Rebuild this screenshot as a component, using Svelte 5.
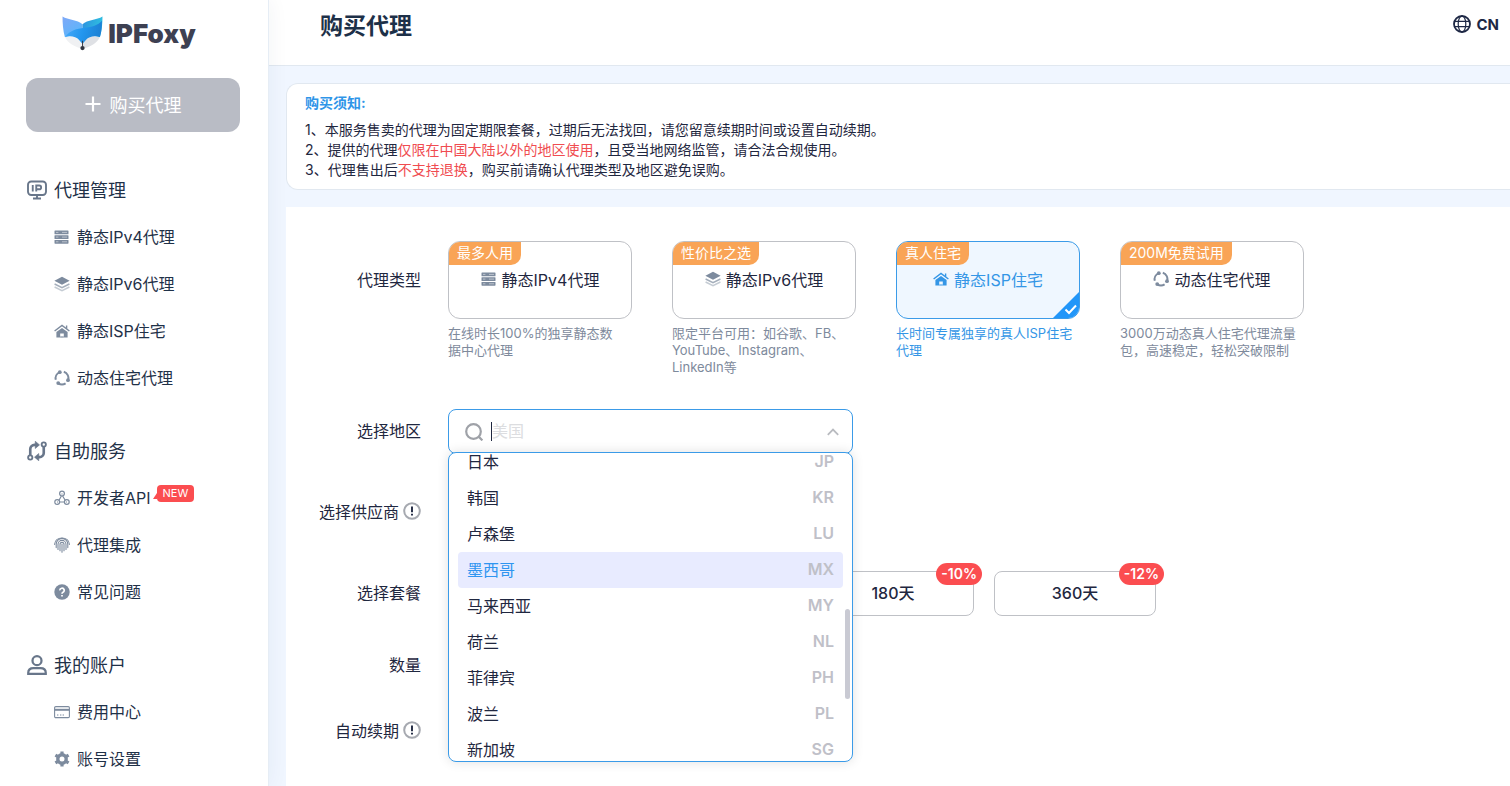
<script lang="ts">
    const groups = [
        {
            icon: 'monitor',
            title: '代理管理',
            items: [
                { icon: 'server', text: '静态IPv4代理' },
                { icon: 'layers', text: '静态IPv6代理' },
                { icon: 'house', text: '静态ISP住宅' },
                { icon: 'cycle', text: '动态住宅代理' }
            ]
        },
        {
            icon: 'swap',
            title: '自助服务',
            items: [
                { icon: 'nodes', text: '开发者API', isNew: true },
                { icon: 'finger', text: '代理集成' },
                { icon: 'help', text: '常见问题' }
            ]
        },
        {
            icon: 'user',
            title: '我的账户',
            items: [
                { icon: 'card', text: '费用中心' },
                { icon: 'gear', text: '账号设置' }
            ]
        }
    ];

    const types = [
        { icon: 'server', name: '静态IPv4代理', tag: '最多人用', desc: '在线时长100%的独享静态数据中心代理' },
        { icon: 'layers', name: '静态IPv6代理', tag: '性价比之选', desc: '限定平台可用：如谷歌、FB、YouTube、Instagram、LinkedIn等' },
        { icon: 'house', name: '静态ISP住宅', tag: '真人住宅', desc: '长时间专属独享的真人ISP住宅代理' },
        { icon: 'cycle', name: '动态住宅代理', tag: '200M免费试用', desc: '3000万动态真人住宅代理流量包，高速稳定，轻松突破限制' }
    ];

    const regions = [
        ['日本', 'JP'],
        ['韩国', 'KR'],
        ['卢森堡', 'LU'],
        ['墨西哥', 'MX'],
        ['马来西亚', 'MY'],
        ['荷兰', 'NL'],
        ['菲律宾', 'PH'],
        ['波兰', 'PL'],
        ['新加坡', 'SG']
    ];

    const plans = [
        { name: '180天', off: '-10%' },
        { name: '360天', off: '-12%' }
    ];

    let selectedType = $state(2);
    let hovered = $state('MX');
    let keyword = $state('');
</script>

{#snippet icon(name: string)}
    <svg class="icon" viewBox="0 0 16 16" fill="none" stroke="currentColor" stroke-width="1.5" aria-hidden="true">
        {#if name === 'monitor'}
            <rect x="0.8" y="1.2" width="14.4" height="10.8" rx="2.6" />
            <path d="M8 12v2.6M4.8 14.8h6.4M4.6 4v5.2M7.4 9.2V4.4h2.4a1.5 1.5 0 0 1 0 3H7.4" />
        {:else if name === 'server'}
            <g fill="currentColor" stroke="none">
                <rect x="0.5" y="1.5" width="14" height="3.8" rx="0.6" />
                <rect x="0.5" y="6.2" width="14" height="3.8" rx="0.6" />
                <rect x="0.5" y="10.9" width="14" height="3.8" rx="0.6" />
            </g>
            <path d="M2 3.4h2.4M8 3.4h5M2 8.1h2.4M8 8.1h5M2 12.8h2.4M8 12.8h5" stroke="#fff" stroke-width="0.8" opacity="0.6" />
        {:else if name === 'layers'}
            <path d="M8 .8 15.6 4.8 8 8.8.4 4.8z" fill="currentColor" stroke="none" />
            <path d="m.6 8 7.4 3.7L15.4 8" opacity="0.7" />
            <path d="m.6 11 7.4 3.7 7.4-3.7" opacity="0.45" />
        {:else if name === 'house'}
            <path d="M.6 8 8 2.4 15.4 8M12.6 2.4v3" stroke-width="1.4" />
            <path d="M2.4 9 8 4.9 13.6 9v5.6H9.8v-4H6.2v4H2.4z" fill="currentColor" stroke="none" />
            <path d="M6.2 14h3.6" stroke-width="1.2" />
        {:else if name === 'cycle'}
            <g stroke-width="2">
                <path d="M9.8 1.8a6.4 6.4 0 0 1 4.2 8.4" />
                <path d="M11.6 13.3a6.4 6.4 0 0 1-7.4-.2" />
                <path d="M1.8 9.8a6.4 6.4 0 0 1 3.7-7.5" />
            </g>
            <g fill="currentColor" stroke="none">
                <circle cx="14" cy="10.2" r="1.9" />
                <circle cx="4.2" cy="13.1" r="1.9" />
                <circle cx="5.8" cy="2.2" r="1.9" />
            </g>
        {:else if name === 'swap'}
            <circle cx="2.6" cy="13.2" r="1.7" />
            <circle cx="13.4" cy="2.8" r="1.7" />
            <path d="M2.6 11.4V6.5a3.4 3.4 0 0 1 3.4-3.4h1.6M13.4 4.6v4.9a3.4 3.4 0 0 1-3.4 3.4H8.4" stroke-width="2.1" />
            <path d="M6.6.2 10 3.1 6.6 6zM9.4 10 6 12.9l3.4 2.9z" fill="currentColor" stroke-width="0.5" />
        {:else if name === 'nodes'}
            <g stroke-width="1.2">
                <circle cx="8" cy="3.6" r="2.4" />
                <circle cx="3.2" cy="12" r="2.4" />
                <circle cx="12.8" cy="12" r="2.4" />
                <path d="M7.4 6 5 10.2M8.6 6l2.6 4.2M5.8 12h4.4M8 3.4v1M3 12h1M12 12h1" />
            </g>
        {:else if name === 'finger'}
            <g stroke-width="1.1" stroke-linecap="round">
                <path d="M8 7v8.2M6 13.8V7.4a2 2 0 0 1 4 0v6.4" />
                <path d="M4 12.4V7.4a4 4 0 0 1 8 0v5" />
                <path d="M2.2 10.6V7.2a5.8 5.8 0 0 1 11.6 0v3.4" />
                <path d="M.6 7.4C.8 3.4 4 1 8 1s7.2 2.4 7.4 6.4" />
            </g>
        {:else if name === 'help'}
            <circle cx="8" cy="8" r="7.7" fill="currentColor" stroke="none" />
            <path d="M5.8 6.4a2.2 2.1 0 1 1 3.2 1.8c-.7.4-1 .7-1 1.5M8 11v1.6" stroke="#fff" stroke-width="1.7" />
        {:else if name === 'user'}
            <circle cx="8" cy="4.5" r="3.6" stroke-width="1.8" />
            <path d="M1 15v-.8c0-2.4 1.8-3.8 4.2-3.8h5.6c2.4 0 4.2 1.4 4.2 3.8v.8z" stroke-width="1.8" />
        {:else if name === 'card'}
            <rect x="0.6" y="2.6" width="14.8" height="11" rx="1.2" stroke-width="1.1" />
            <path d="M.6 5.8h14.8" stroke-width="2" />
            <path d="M3 11h1.4M6 11h1.4M8.6 11h1.4" stroke-width="1" />
        {:else if name === 'gear'}
            <circle cx="8" cy="8" r="4.2" stroke-width="3.4" />
            <path d="M8 .4v3M8 12.6v3M1.4 4.2 4 5.7M12 10.3l2.6 1.5M1.4 11.8 4 10.3M12 5.7l2.6-1.5" stroke-width="3.2" />
        {/if}
    </svg>
{/snippet}

{#snippet info()}
    <svg class="info" viewBox="0 0 18 18" aria-hidden="true">
        <circle cx="9" cy="9" r="7.8" fill="none" stroke="#a6a9b0" stroke-width="2" />
        <path d="M9 4.6v5.6M9 11.7v1.9" stroke="#1f2740" stroke-width="1.9" />
    </svg>
{/snippet}

<div class="page">
    <aside>
        <a class="logo" href="/">
            <svg viewBox="0 0 40 34" aria-hidden="true">
                <defs>
                    <linearGradient id="earL" x1="0" y1="0" x2="0.6" y2="1">
                        <stop offset="0" stop-color="#7fa8f8" />
                        <stop offset="1" stop-color="#5bb6fa" />
                    </linearGradient>
                    <linearGradient id="earR" x1="0" y1="0" x2="1" y2="0.3">
                        <stop offset="0" stop-color="#2d8fe0" />
                        <stop offset="1" stop-color="#2ec0e0" />
                    </linearGradient>
                    <linearGradient id="face" x1="0" y1="0.3" x2="1" y2="0.5">
                        <stop offset="0" stop-color="#46aafa" />
                        <stop offset="0.5" stop-color="#2396ee" />
                        <stop offset="1" stop-color="#1c7fd2" />
                    </linearGradient>
                </defs>
                <!-- cheeks -->
                <path d="M2.8 20.5C6 26.500 12 30 20 32V19z" fill="#f0f1f3" />
                <path d="M37 20.500C34 26.500 28 30 20 32V19z" fill="#dfe1e5" />
                <!-- ears -->
                <path d="M.5.500C6 4 15 3.500 20 8v8L2.800 20.500C1 14 .5 7 .5.500z" fill="url(#earL)" />
                <path d="M39.500.500C34 4 25 3.500 20 8v8l17 4.500C39 14 39.500 7 39.500.500z" fill="url(#earR)" />
                <!-- face -->
                <path d="M2.800 20.500C8 14 14 12.500 22 11.500c7-.8 13-2.500 17-7 0 6-.5 11-2 16-5-2-11-.5-13.500 2.500-1.500 1.500-2.500 3-3.500 4-1-1-2-2.500-3.500-4-2.500-3-8.700-4.500-13.700-2.500z" fill="url(#face)" />
                <path d="M19.600 24h.9v6h-.9z" fill="#30343f" />
                <circle cx="20" cy="31.200" r="2.100" fill="#30343f" />
            </svg>
            <span>IPFoxy</span>
        </a>
        <button class="buy" type="button">
            <svg viewBox="0 0 16 16" aria-hidden="true"><path d="M8 .5v15M.5 8h15" stroke="#fff" stroke-width="2.2" /></svg>
            购买代理
        </button>
        <nav>
            {#each groups as group}
                <section>
                    <h2>{@render icon(group.icon)}<span class="text">{group.title}</span></h2>
                    <ul>
                        {#each group.items as item}
                            <li>
                                <a href="/">
                                    {@render icon(item.icon)}
                                    <span class="text">{item.text}{#if item.isNew}<em>NEW</em>{/if}</span>
                                </a>
                            </li>
                        {/each}
                    </ul>
                </section>
            {/each}
        </nav>
    </aside>

    <main>
        <header>
            <h1>购买代理</h1>
            <button class="lang" type="button">
                <svg viewBox="0 0 18 18" fill="none" stroke="currentColor" aria-hidden="true">
                    <circle cx="9" cy="9" r="8" stroke-width="1.8" />
                    <ellipse cx="9" cy="9" rx="3.8" ry="8" stroke-width="1.2" />
                    <path d="M1.5 6.4h15M1.5 11.6h15" stroke-width="1.2" />
                </svg>
                CN
            </button>
        </header>

        <div class="body">
            <div class="notice">
                <strong>购买须知:</strong>
                <p>1、本服务售卖的代理为固定期限套餐，过期后无法找回，请您留意续期时间或设置自动续期。</p>
                <p>2、提供的代理<b>仅限在中国大陆以外的地区使用</b>，且受当地网络监管，请合法合规使用。</p>
                <p>3、代理售出后<b>不支持退换</b>，购买前请确认代理类型及地区避免误购。</p>
            </div>

            <form class="panel">
                <div class="row type-row">
                    <span class="label">代理类型</span>
                    <div class="types">
                        {#each types as type, i}
                            <div class="type" class:active={selectedType === i}>
                                <button type="button" onclick={() => (selectedType = i)}>
                                    <span class="tag">{type.tag}</span>
                                    {@render icon(type.icon)}
                                    {type.name}
                                    {#if selectedType === i}
                                        <svg class="tick" viewBox="0 0 26 26" aria-hidden="true">
                                            <path d="M26 0v26H0z" fill="#2196f9" />
                                            <path d="m12.5 17.5 3.5 3.5 7-7.5" fill="none" stroke="#fff" stroke-width="2" />
                                        </svg>
                                    {/if}
                                </button>
                                <p>{type.desc}</p>
                            </div>
                        {/each}
                    </div>
                </div>

                <div class="row region-row">
                    <label class="label" for="region">选择地区</label>
                    <div class="select">
                        <div class="search">
                            <svg class="glass" viewBox="0 0 18 18" fill="none" stroke="#9fa2a8" stroke-width="2.2" aria-hidden="true">
                                <circle cx="8.5" cy="8.5" r="7.3" />
                                <path d="m13.4 13.4 4 4" />
                            </svg>
                            <i class="caret"></i>
                            <input id="region" type="text" placeholder="美国" autocomplete="off" bind:value={keyword} />
                            <svg class="arrow" viewBox="0 0 12 8" fill="none" stroke="#b9bbc0" stroke-width="1.8" aria-hidden="true">
                                <path d="m.8 6.8 5.2-5.2 5.2 5.2" />
                            </svg>
                        </div>
                        <div class="dropdown">
                            <ul>
                                {#each regions as [name, code]}
                                    <li class:hover={hovered === code} onmouseenter={() => (hovered = code)}>
                                        <span>{name}</span>
                                        <small>{code}</small>
                                    </li>
                                {/each}
                            </ul>
                            <div class="thumb"></div>
                        </div>
                    </div>
                </div>

                <div class="row">
                    <span class="label">选择供应商{@render info()}</span>
                </div>

                <div class="row plan-row">
                    <span class="label">选择套餐</span>
                    <div class="plans">
                        {#each plans as plan}
                            <button type="button">{plan.name}<span class="off">{plan.off}</span></button>
                        {/each}
                    </div>
                </div>

                <div class="row count-row">
                    <span class="label">数量</span>
                </div>

                <div class="row">
                    <span class="label">自动续期{@render info()}</span>
                </div>
            </form>
        </div>
    </main>
</div>

<style>
    :global(body){
        margin: 0;
        overflow: hidden;
    }
    .page{
        display: flex;
        height: 100vh;
        overflow: hidden;
        background: #f0f6ff;
        color: #1f2740;
        font-family: Inter, "Noto Sans CJK SC", sans-serif;
        font-size: 16px;
    }
    button, input{
        font: inherit;
        color: inherit;
        box-sizing: border-box;
    }
    button{
        cursor: pointer;
    }
    h1, h2, p, ul{
        margin: 0;
        padding: 0;
    }
    ul{
        list-style: none;
    }
    .icon{
        width: 16px;
        height: 16px;
        flex: none;
        color: #7d8b9e;
    }

    /* sidebar */
    aside{
        flex: none;
        box-sizing: border-box;
        width: 269px;
        padding: 15px 28px 0 26px;
        background: #fff;
        border-right: 1px solid #e6edf5;
        box-shadow: 0 0 20px rgba(30, 50, 90, 0.06);
        z-index: 1;
    }
    .logo{
        display: flex;
        justify-content: center;
        align-items: center;
        gap: 5px;
        height: 36px;
        padding-right: 8px;
        color: #3d4052;
        font-size: 26px;
        font-weight: 900;
        text-decoration: none;
    }
    .logo svg{
        width: 41px;
        height: 35px;
    }
    .buy{
        display: flex;
        justify-content: center;
        align-items: center;
        gap: 9px;
        width: 100%;
        height: 54px;
        margin: 27px 0 34px;
        padding: 0 0 2px;
        border: 0;
        border-radius: 12px;
        background: #b9bcc5;
        color: #fff;
        font-size: 18px;
    }
    .buy svg{
        width: 16px;
        height: 16px;
    }
    section{
        margin-bottom: 26px;
    }
    h2{
        display: flex;
        align-items: center;
        gap: 6px;
        height: 47px;
        color: #1f3148;
        font-size: 18px;
        font-weight: 400;
    }
    h2 .icon{
        width: 22px;
        height: 20px;
        color: #68768a;
    }
    nav li a{
        display: flex;
        align-items: center;
        gap: 7px;
        height: 47px;
        padding-left: 28px;
        color: #1f3148;
        text-decoration: none;
    }
    .text{
        position: relative;
        padding-bottom: 2px;
    }
    em{
        position: absolute;
        left: 100%;
        top: 0;
        margin-left: 6px;
        padding: 0 6px;
        border-radius: 4px;
        background: #fb4d50;
        color: #fff;
        font-size: 11px;
        font-style: normal;
        line-height: 17px;
    }
    em::before{
        content: "";
        position: absolute;
        left: -4px;
        bottom: 3px;
        border: solid transparent;
        border-width: 6px 0 0 6px;
        border-right: 4px solid #fb4d50;
        border-left-width: 0;
    }

    /* header */
    main{
        flex: 1;
        min-width: 0;
        display: flex;
        flex-direction: column;
    }
    header{
        display: flex;
        justify-content: space-between;
        align-items: center;
        height: 48px;
        padding: 0 11px 17px 51px;
        background: #fff;
        border-bottom: 1px solid #e1e8f0;
    }
    h1{
        color: #1d3048;
        font-size: 23px;
        font-weight: 700;
    }
    .lang{
        display: flex;
        align-items: center;
        gap: 5px;
        padding: 0;
        border: 0;
        background: none;
        color: #1d2744;
        font-size: 15px;
        font-weight: 700;
    }
    .lang svg{
        width: 18px;
        height: 18px;
    }

    .body{
        flex: 1;
        display: flex;
        flex-direction: column;
        gap: 17px;
        padding: 17px 0 0 17px;
    }
    .notice{
        padding: 9px 18px;
        border: 1px solid #e1e8f0;
        border-right: 0;
        border-radius: 12px 0 0 12px;
        background: #fff;
        font-size: 14px;
        line-height: 20px;
    }
    .notice strong{
        display: block;
        margin-bottom: 7px;
        color: #2f95e8;
    }
    .notice b{
        color: #f04c50;
        font-weight: 400;
    }

    /* order form */
    .panel{
        flex: 1;
        padding-top: 34px;
        background: #fff;
    }
    .row{
        display: flex;
        gap: 27px;
        min-height: 44px;
    }
    .label{
        flex: none;
        display: flex;
        justify-content: flex-end;
        align-items: center;
        gap: 4px;
        box-sizing: border-box;
        width: 135px;
        height: 44px;
        padding-bottom: 2px;
    }
    .info{
        width: 18px;
        height: 18px;
    }
    .type-row{
        margin-bottom: 33px;
    }
    .type-row .label{
        height: 78px;
    }
    .types{
        display: flex;
        gap: 40px;
    }
    .type{
        width: 184px;
    }
    .type button{
        position: relative;
        display: flex;
        justify-content: center;
        align-items: center;
        gap: 5px;
        width: 100%;
        height: 78px;
        padding: 0 0 2px;
        overflow: hidden;
        border: 1px solid #bfc1c6;
        border-radius: 12px;
        background: #fff;
    }
    .tag{
        position: absolute;
        left: 0;
        top: 0;
        padding: 0 8px 1px;
        border-radius: 0 0 10px 0;
        background: #f9a456;
        color: #fff;
        font-size: 14px;
        line-height: 22px;
    }
    .type p{
        margin-top: 6px;
        padding-right: 7px;
        color: #7e8a9c;
        font-size: 13px;
        line-height: 17px;
    }
    .tick{
        position: absolute;
        right: 0;
        bottom: 0;
        width: 26px;
        height: 26px;
    }
    .active button{
        border-color: #3b9be8;
        background: #eff7ff;
    }
    .active button, .active p, .active .icon{
        color: #3496e6;
    }

    .region-row{
        margin-bottom: 36px;
    }
    .select{
        position: relative;
        width: 405px;
    }
    .search{
        display: flex;
        align-items: center;
        box-sizing: border-box;
        height: 45px;
        padding: 0 13px 0 16px;
        border: 1px solid #3b9be8;
        border-radius: 8px;
    }
    .glass{
        width: 18px;
        height: 18px;
        margin-right: 8px;
    }
    .caret{
        width: 1px;
        height: 19px;
        background: #1f2740;
    }
    .search input{
        flex: 1;
        min-width: 0;
        padding: 0 0 2px;
        border: 0;
        outline: 0;
        background: none;
    }
    .search input::placeholder{
        color: #dcdde0;
        opacity: 1;
    }
    .arrow{
        width: 12px;
        height: 8px;
    }
    .dropdown{
        position: absolute;
        top: 43px;
        left: 0;
        z-index: 2;
        box-sizing: border-box;
        width: 100%;
        height: 310px;
        overflow: hidden;
        border: 1px solid #3b9be8;
        border-radius: 8px;
        background: #fff;
        box-shadow: 0 0 12px rgba(0, 0, 0, 0.12);
    }
    /* list is scrolled part of the way down */
    .dropdown ul{
        margin: -9px 9px 0;
    }
    .dropdown li{
        display: flex;
        justify-content: space-between;
        align-items: center;
        box-sizing: border-box;
        height: 36px;
        padding: 0 9px 2px;
        border-radius: 4px;
    }
    .dropdown small{
        color: #bfc0c8;
        font-size: 16px;
        font-weight: 600;
    }
    .hover{
        background: #e8ebff;
    }
    .hover span{
        color: #2f95f0;
    }
    .thumb{
        position: absolute;
        right: 2px;
        top: 156px;
        width: 5px;
        height: 90px;
        border-radius: 3px;
        background: #c9cad3;
    }

    .plan-row{
        margin-top: 37px;
        margin-bottom: 27px;
    }
    .plans{
        display: grid;
        grid-template-columns: repeat(4, 162px);
        gap: 20px;
    }
    .plans button{
        position: relative;
        height: 45px;
        padding-bottom: 5px;
        border: 1px solid #bfc1c6;
        border-radius: 8px;
        background: #fff;
        font-weight: 500;
    }
    .plans button:first-child{
        grid-column: 3;
    }
    .off{
        position: absolute;
        top: -9px;
        right: -9px;
        padding: 0 5px;
        border-radius: 11px;
        background: #fb4d50;
        color: #fff;
        font-size: 14px;
        font-weight: 600;
        line-height: 22px;
    }
    .count-row{
        margin-bottom: 22px;
    }
</style>
